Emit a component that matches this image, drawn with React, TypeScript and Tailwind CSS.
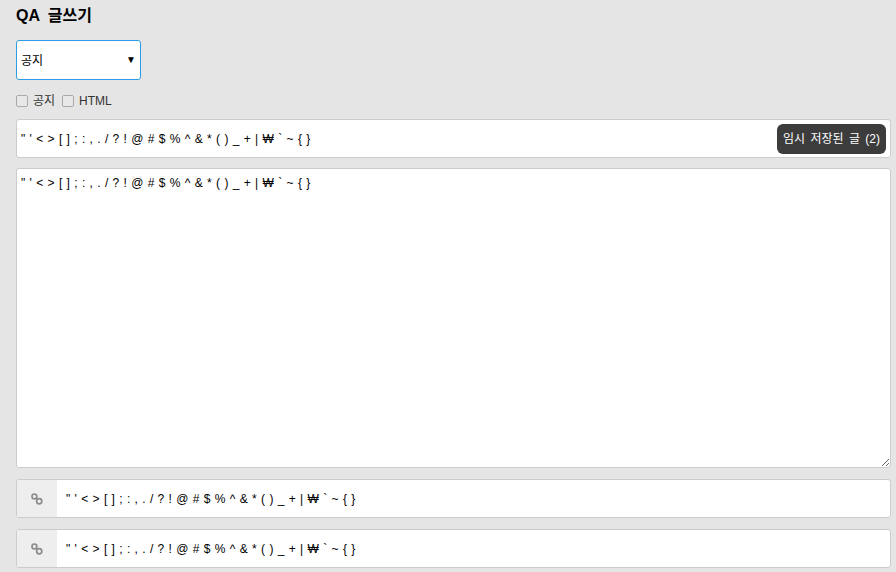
import { useState } from "react";

const SPECIAL = "\" ' < > [ ] ; : , . / ? ! @ # $ % ^ & * ( ) _ + | ₩ ` ~ { }";
const FONT = "font-['Liberation_Sans','Noto_Sans_CJK_KR',sans-serif]";

const LinkIcon = () => (
    <svg width="12" height="12" viewBox="0 0 12 12" fill="none" stroke="#8c8c8c" strokeWidth="1.7">
        <circle cx="3.4" cy="3.4" r="2.4" />
        <circle cx="8.2" cy="8.2" r="2.6" />
    </svg>
);

const LinkRow = ({ value }: { value: string }) => (
    <div className="flex h-[39px] overflow-hidden rounded-[3px] border border-[#ccc] bg-white">
        <div className="flex w-10 shrink-0 items-center justify-center bg-[#eee]">
            <LinkIcon />
        </div>
        <input
            type="text"
            readOnly
            value={value}
            className="w-full px-[9px] text-xs text-black outline-none [word-spacing:1px]"
        />
    </div>
);

const App = () => {
    const [subject] = useState<string>(SPECIAL);

    return (
        <div className={`${FONT} h-[572px] overflow-hidden bg-[#e5e5e5] pl-4 pr-[5px] text-black`}>
            <h1 className="pt-[5px] text-base leading-[22px] font-bold [word-spacing:4px]">QA 글쓰기</h1>

            <div className="relative mt-[13px] w-[125px]">
                <select className="h-10 w-full appearance-none rounded-[3px] border border-[#2e9be6] bg-white px-1 pt-[2px] text-xs text-black outline-none">
                    <option>공지</option>
                </select>
                <span className="pointer-events-none absolute top-[14px] right-[5px] text-[10px] leading-3">▼</span>
            </div>

            <div className="mt-[14px] flex h-[14px] items-center text-xs text-[#333]">
                <input
                    type="checkbox"
                    className="h-3 w-3 appearance-none rounded-[2px] border border-[#aaa] bg-[#e8e8e8]"
                />
                <span className="ml-[5px]">공지</span>
                <input
                    type="checkbox"
                    className="ml-[7px] h-3 w-3 appearance-none rounded-[2px] border border-[#aaa] bg-[#e8e8e8]"
                />
                <span className="ml-[5px]">HTML</span>
            </div>

            <div className="relative mt-[11px] h-[39px] rounded-[3px] border border-[#ccc] bg-white">
                <input
                    type="text"
                    readOnly
                    value={subject}
                    className="h-full w-full rounded-[3px] px-1 text-xs text-black outline-none [word-spacing:1px]"
                />
                <button className="absolute top-1 right-1 h-[30px] w-[109px] rounded-md bg-[#3c3c3c] text-xs text-white [word-spacing:2px]">
                    임시 저장된 글 (2)
                </button>
            </div>

            <textarea
                readOnly
                value={subject}
                className="mt-[10px] block h-[300px] w-full rounded-[3px] border border-[#ccc] bg-white px-1 py-[6px] text-xs text-black outline-none [word-spacing:1px]"
            />

            <div className="mt-[11px] flex flex-col gap-[11px]">
                <LinkRow value={subject} />
                <LinkRow value={subject} />
            </div>
        </div>
    );
};

export default App;
